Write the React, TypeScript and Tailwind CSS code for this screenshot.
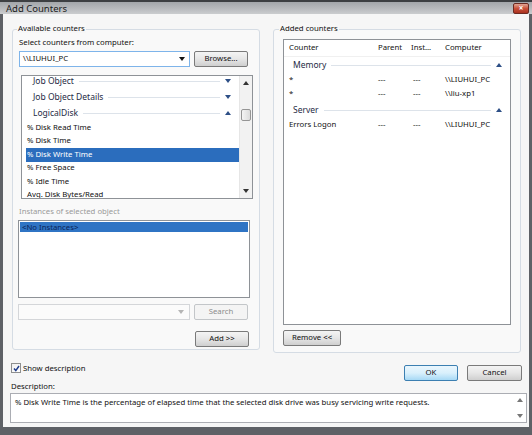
import React from "react";

const font = "font-['Noto_Sans',sans-serif]";

function Tri({ up, className = "" }: { up?: boolean; className?: string }) {
  return (
    <svg width="6" height="4" viewBox="0 0 6 4" className={className}>
      {up ? <path d="M0 4 L3 0 L6 4 Z" fill="currentColor" /> : <path d="M0 0 L6 0 L3 4 Z" fill="currentColor" />}
    </svg>
  );
}

function Btn({ children, w, disabled, focused }: { children: React.ReactNode; w: string; disabled?: boolean; focused?: boolean }) {
  const base = "h-[16px] flex items-center justify-center rounded-[2px] border text-[7.75px] ";
  const look = disabled
    ? "border-[#c3c6c9] bg-[#f4f4f4] text-[#8d8d8d]"
    : focused
    ? "border-[#3c7fb1] bg-gradient-to-b from-[#eaf6fd] via-[#d9f0fc] to-[#a7d9f5] text-[#111]"
    : "border-[#7a7a7a] bg-gradient-to-b from-[#f4f4f4] via-[#e6e6e6] to-[#cfcfcf] text-[#111]";
  return <div className={base + look + " " + w}>{children}</div>;
}

function GroupRow({ label, up, pl = "pl-[11px]" }: { label: string; up?: boolean; pl?: string }) {
  return (
    <div className={`h-[16px] flex items-center ${pl} pr-[8px] text-[8.5px] text-[#1e2a44]`}>
      <span>{label}</span>
      <div className="flex-1 h-px bg-[#dde3ea] ml-[5px] mr-[5px]" />
      <Tri up={up} className="text-[#2d4f86]" />
    </div>
  );
}

export default function App() {
  const counters = ["% Disk Read Time", "% Disk Time", "% Disk Write Time", "% Free Space", "% Idle Time", "Avg. Disk Bytes/Read"];
  const cols = "grid grid-cols-[89px_33px_34px_1fr] items-center pl-[5px]";
  return (
    <div className={`w-[532px] h-[435px] bg-[#5e6166] flex flex-col px-[3px] pb-[8px] ${font}`}>
      {/* Title bar */}
      <div className="h-[17px] -mx-[3px] border-t-2 border-[#3d3f42] bg-gradient-to-b from-[#a3a6aa] via-[#b6b8bb] to-[#cbcdcf] flex items-center justify-between pl-[6px] pr-[3px]">
        <span className="text-[9.5px] text-[#1b1b1b] leading-none mt-[1px]">Add Counters</span>
        <div className="w-[16px] h-[11px] rounded-[2px] border border-[#6b2a22] bg-gradient-to-b from-[#e0a493] via-[#c9503a] to-[#a9301e] flex items-center justify-center text-white text-[8px] font-bold leading-none">
          ×
        </div>
      </div>

      {/* Body */}
      <div className="flex-1 bg-[#f6f6f6] flex flex-col pl-[9px] pr-[2px] text-[7.75px] text-[#111]">
        <div className="flex gap-[13px] mt-[15px] pr-[6px]">
          {/* Available counters */}
          <div className="w-[248px] h-[321px] border border-[#d5dce4] rounded-[3px] bg-[#f9f9f9] pl-[6px] pr-[5px]">
            <div className="-mt-[7px] ml-[-2px] w-fit px-[1px] bg-[#f7f7f7] leading-[10px]">Available counters</div>
            <div className="mt-[4px] leading-[10px]">Select counters from computer:</div>
            <div className="flex gap-[4px] mt-[4px]">
              <div className="w-[171px] h-[16px] bg-white border border-[#7eb4ea] flex items-center justify-between pl-[3px] pr-[4px]">
                <span>\\LIUHUI_PC</span>
                <Tri className="text-[#111]" />
              </div>
              <Btn w="w-[54px]">Browse...</Btn>
            </div>
            {/* counter list */}
            <div className="ml-[2px] mt-[8px] w-[232px] h-[124px] border border-[#8e9297] bg-white flex overflow-hidden">
              <div className="flex-1 overflow-hidden">
                <div className="-mt-[3px]">
                  <GroupRow label="Job Object" />
                  <GroupRow label="Job Object Details" />
                  <GroupRow label="LogicalDisk" up />
                  {counters.map((c, i) => (
                    <div
                      key={c}
                      className={"h-[13.5px] flex items-center ml-[4px] pl-[1px] " + (i === 2 ? "bg-[#2b6dbd] text-white" : "")}
                    >
                      {c}
                    </div>
                  ))}
                </div>
              </div>
              <div className="w-[13px] bg-[#f2f2f2] border-l border-[#e6e6e6] flex flex-col items-center">
                <Tri up className="text-[#333] mt-[5px]" />
                <div className="mt-[24px] w-[10px] h-[12px] rounded-[2px] border border-[#959595] bg-gradient-to-r from-[#f4f4f4] to-[#dcdcdc]" />
                <div className="flex-1" />
                <Tri className="text-[#333] mb-[5px]" />
              </div>
            </div>
            <div className="text-[#9a9a9a] mt-[7px] leading-[10px]">Instances of selected object</div>
            <div className="-ml-[1px] mt-[4px] w-[232px] h-[78px] border border-[#8e9297] bg-white p-[1px]">
              <div className="h-[10px] bg-[#2f74c4] text-[#0b2458] leading-[10px] pl-[2px]">&lt;No Instances&gt;</div>
            </div>
            <div className="flex gap-[4px] mt-[6px] -ml-[1px]">
              <div className="w-[172px] h-[16px] bg-[#fbfbfb] border border-[#d4d6d9] flex items-center justify-end pr-[5px]">
                <Tri className="text-[#b5b5b5]" />
              </div>
              <Btn w="w-[54px]" disabled>
                Search
              </Btn>
            </div>
            <div className="flex justify-end mt-[11px] pr-[5px]">
              <Btn w="w-[54px]">Add &gt;&gt;</Btn>
            </div>
          </div>

          {/* Added counters */}
          <div className="w-[248px] h-[324px] border border-[#d5dce4] rounded-[3px] bg-[#f9f9f9] pl-[9px] pr-[9px]">
            <div className="-mt-[7px] ml-[-4px] w-fit px-[1px] bg-[#f7f7f7] leading-[10px]">Added counters</div>
            <div className="h-[286px] mt-[6px] border border-[#8e9297] bg-white">
              <div className={`h-[17px] ${cols} border-b border-[#f0f0f0]`}>
                <span>Counter</span>
                <span>Parent</span>
                <span>Inst...</span>
                <span>Computer</span>
              </div>
              <GroupRow label="Memory" up pl="pl-[9px]" />
              {[
                ["*", "\\\\LIUHUI_PC"],
                ["*", "\\\\liu-xp1"],
              ].map(([c, pc], i) => (
                <div key={i} className={`h-[14px] ${cols}`}>
                  <span>{c}</span>
                  <span>---</span>
                  <span className="pl-[2px]">---</span>
                  <span>{pc}</span>
                </div>
              ))}
              <div className="mt-[1px]">
                <GroupRow label="Server" up pl="pl-[9px]" />
              </div>
              <div className={`h-[14px] ${cols}`}>
                <span>Errors Logon</span>
                <span>---</span>
                <span className="pl-[2px]">---</span>
                <span>\\LIUHUI_PC</span>
              </div>
            </div>
            <div className="mt-[5px]">
              <Btn w="w-[58px]">Remove &lt;&lt;</Btn>
            </div>
          </div>
        </div>

        {/* bottom */}
        <div className="flex justify-between h-[28px] pr-[5px]">
          <div className="flex items-start mt-[10px] -ml-[1px]">
            <div className="w-[10px] h-[10px] border border-[#8e8f8f] bg-gradient-to-br from-[#f0f0f0] to-white flex items-center justify-center">
              <svg width="7" height="7" viewBox="0 0 7 7">
                <path d="M1 3.6 L2.8 5.6 L6 1" stroke="#1d3a8a" strokeWidth="1.5" fill="none" />
              </svg>
            </div>
            <span className="ml-[2px] leading-[10px]">Show description</span>
          </div>
          <div className="flex gap-[9px] mt-[12px]">
            <Btn w="w-[54px]" focused>
              OK
            </Btn>
            <Btn w="w-[55px]">Cancel</Btn>
          </div>
        </div>
        <div className="leading-[10px] -ml-[1px]">Description:</div>
        <div className="mt-[2px] -ml-[2px] h-[30px] border border-[#abadb3] bg-white flex">
          <div className="flex-1 pl-[4px] pt-[3px] leading-[10px]">
            % Disk Write Time is the percentage of elapsed time that the selected disk drive was busy servicing write requests.
          </div>
          <div className="w-[12px] flex flex-col items-center justify-between py-[4px]">
            <Tri up className="text-[#777]" />
            <Tri className="text-[#777]" />
          </div>
        </div>
        <div className="h-[4px]" />
      </div>
    </div>
  );
}
